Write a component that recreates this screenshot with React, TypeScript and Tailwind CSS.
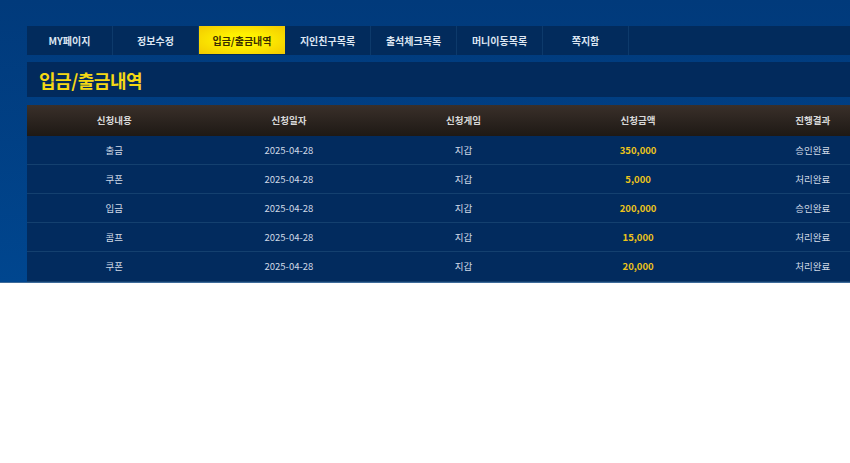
const tabs = ['MY페이지', '정보수정', '입금/출금내역', '지인친구목록', '출석체크목록', '머니이동목록', '쪽지함']

const rows = [
  { type: '출금', date: '2025-04-28', game: '지갑', amount: '350,000', result: '승인완료' },
  { type: '쿠폰', date: '2025-04-28', game: '지갑', amount: '5,000', result: '처리완료' },
  { type: '입금', date: '2025-04-28', game: '지갑', amount: '200,000', result: '승인완료' },
  { type: '콤프', date: '2025-04-28', game: '지갑', amount: '15,000', result: '처리완료' },
  { type: '쿠폰', date: '2025-04-28', game: '지갑', amount: '20,000', result: '처리완료' },
]

const heads = ['신청내용', '신청일자', '신청게임', '신청금액', '진행결과']

export default function App() {
  return (
    <div
      className="w-[850px] h-[463px] overflow-hidden bg-white"
      style={{ fontFamily: '"Noto Sans CJK KR", "Noto Sans", sans-serif' }}
    >
      <div className="bg-gradient-to-b from-[#013a7b] to-[#00468f] pl-[27px] pt-[26px] border-b border-[#3d6a99]">
        <div className="w-[873px]">
          {/* Tabs */}
          <div className="flex h-[29px] bg-[#022b5c]">
            {tabs.map((t, i) =>
              i === 2 ? (
                <div
                  key={t}
                  className="w-[86px] h-[28px] flex items-center justify-center text-[10px] font-bold text-[#3a2e00] bg-[radial-gradient(ellipse_at_center,#fff200_30%,#f2c800_100%)]"
                >
                  {t}
                </div>
              ) : (
                <div
                  key={t}
                  className="w-[86px] flex items-center justify-center text-[10px] font-bold text-[#dde6f2] border-r border-[#0d3a6b]"
                >
                  {t}
                </div>
              )
            )}
          </div>

          {/* Title */}
          <div className="mt-[7px] h-[35px] bg-[#022a5c] flex items-center pl-[12px]">
            <h1 className="text-[18px] font-bold text-[#f4d814] leading-none tracking-tight">입금/출금내역</h1>
          </div>

          {/* Table */}
          <div className="mt-[8px]">
            <div className="grid grid-cols-5 h-[31px] bg-gradient-to-b from-[#3a302a] to-[#1e1915]">
              {heads.map((h) => (
                <div key={h} className="flex items-center justify-center text-[9.5px] font-bold text-[#d8d8d8]">
                  {h}
                </div>
              ))}
            </div>
            {rows.map((r, i) => (
              <div
                key={i}
                className="grid grid-cols-5 h-[29px] bg-[#022b5e] text-[9.5px] text-[#d0d9e6] border-b border-[#14406f] last:h-[30px]"
              >
                <div className="flex items-center justify-center">{r.type}</div>
                <div className="flex items-center justify-center">{r.date}</div>
                <div className="flex items-center justify-center">{r.game}</div>
                <div className="flex items-center justify-center font-bold text-[#eec41a]">{r.amount}</div>
                <div className="flex items-center justify-center">{r.result}</div>
              </div>
            ))}
          </div>
        </div>
      </div>
    </div>
  )
}
